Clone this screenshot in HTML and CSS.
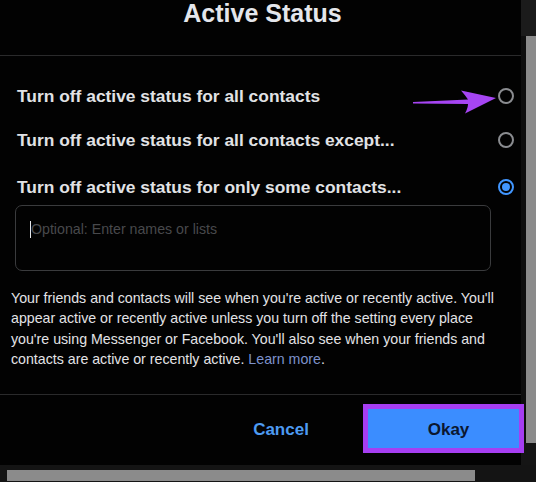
FILE: index.html
```html
<!DOCTYPE html>
<html lang="en">
<head>
<meta charset="utf-8">
<title>Active Status</title>
<link rel="stylesheet" href="styles.css">
</head>
<body>
<div class="screen">
  <div class="main">
    <div class="dialog">
      <header class="head"><h1 class="title">Active Status</h1></header>
      <div class="options">
        <div class="option"><span class="label">Turn off active status for all contacts</span><span class="radio"></span></div>
        <div class="option second"><span class="label">Turn off active status for all contacts except...</span><span class="radio"></span></div>
        <div class="option third"><span class="label">Turn off active status for only some contacts...</span><span class="radio on"></span></div>
        <div class="field"><span class="caret"></span><span class="placeholder">Optional: Enter names or lists</span></div>
      </div>
      <p class="note">Your friends and contacts will see when you're active or recently active. You'll appear active or recently active unless you turn off the setting every place you're using Messenger or Facebook. You'll also see when your friends and contacts are active or recently active. <a class="link">Learn more</a>.</p>
      <footer class="foot">
        <button class="btn cancel">Cancel</button>
        <button class="btn okay">Okay</button>
      </footer>
      <svg class="arrow" width="90" height="28" viewBox="0 0 90 28"><path d="M3,14 L58,11.5 Q55,7 51,2.5 L86,10 L55,25.5 Q58,20 58,16 L3,15.6 Z" fill="#a645f3"/></svg>
    </div>
    <div class="vscroll">
      <div class="vcap"></div>
      <div class="vtrack"><div class="vgap"></div><div class="vthumb"></div></div>
    </div>
  </div>
  <div class="hscroll"><div class="hthumb"></div></div>
</div>
</body>
</html>
```
FILE: styles.css
```css
html, body {
  margin: 0;
  padding: 0;
  background: #141414;
}
.screen {
  width: 536px;
  height: 482px;
  overflow: hidden;
  font-family: "Liberation Sans", Arial, sans-serif;
}
.main {
  display: flex;
  height: 465px;
}
.dialog {
  position: relative;
  width: 521px;
  height: 465px;
  background: #020202;
  display: flex;
  flex-direction: column;
}
.head {
  height: 55px;
  border-bottom: 1px solid #2a2a2b;
}
.title {
  margin: 0;
  padding-left: 4px;
  font-size: 25px;
  line-height: 26px;
  font-weight: bold;
  text-align: center;
  color: #e4e6eb;
}
.options {
  padding: 28px 7px 0 15px;
}
.option {
  display: flex;
  justify-content: space-between;
  align-items: center;
  height: 24px;
  padding-left: 2px;
}
.option.second { margin-top: 20px; }
.option.third { margin-top: 23px; }
.label {
  font-size: 17.4px;
  font-weight: bold;
  color: #e1e2e5;
}
.radio {
  box-sizing: border-box;
  width: 16px;
  height: 16px;
  border: 2px solid #8a8c90;
  border-radius: 50%;
}
.radio.on {
  border-color: #4196ff;
  display: flex;
  align-items: center;
  justify-content: center;
}
.radio.on::after {
  content: "";
  width: 8px;
  height: 8px;
  border-radius: 50%;
  background: #4196ff;
}
.field {
  box-sizing: border-box;
  width: 476px;
  height: 66px;
  margin-top: 6px;
  border: 1px solid #3a3b3d;
  border-radius: 7px;
  padding: 14px 0 0 14px;
  display: flex;
  align-items: flex-start;
}
.caret {
  width: 1px;
  height: 17px;
  margin-top: 1px;
  background: #e4e6eb;
}
.placeholder {
  font-size: 14.2px;
  line-height: 18px;
  color: #48494c;
}
.note {
  margin: 17px 0 0;
  padding: 0 14px 25px 11px;
  font-size: 14.2px;
  line-height: 20.33px;
  color: #e2e3e6;
}
.link {
  color: #7d92cc;
}
.foot {
  flex: 1;
  border-top: 1px solid #2a2a2b;
  display: flex;
  justify-content: flex-end;
  align-items: flex-start;
  gap: 12px;
  padding-top: 9px;
}
.btn {
  font-family: "Liberation Sans", Arial, sans-serif;
  font-size: 17px;
  font-weight: bold;
  border: none;
  background: none;
  padding: 3px 0 0;
  height: 49px;
}
.cancel {
  width: 140px;
  color: #4d9bf2;
}
.okay {
  position: relative;
  z-index: 1;
  box-sizing: border-box;
  width: 161px;
  margin-right: -3px;
  padding-left: 10px;
  background: #3b8dff;
  border: 5px solid #a63ef2;
  color: #0b1730;
}
.arrow {
  position: absolute;
  left: 410px;
  top: 88px;
}
.vscroll {
  width: 15px;
  background: #151515;
  display: flex;
  flex-direction: column;
}
.vcap {
  height: 36px;
  background: #1b1b1b;
}
.vtrack {
  display: flex;
  height: 407px;
}
.vgap {
  width: 5px;
  background: #0e0e0e;
}
.vthumb {
  flex: 1;
  background: #8b8b8b;
}
.hscroll {
  height: 17px;
  background: #141414;
  padding-top: 5px;
  box-sizing: border-box;
}
.hthumb {
  width: 468px;
  height: 11px;
  margin-left: 7px;
  background: #8b8b8b;
}
```
